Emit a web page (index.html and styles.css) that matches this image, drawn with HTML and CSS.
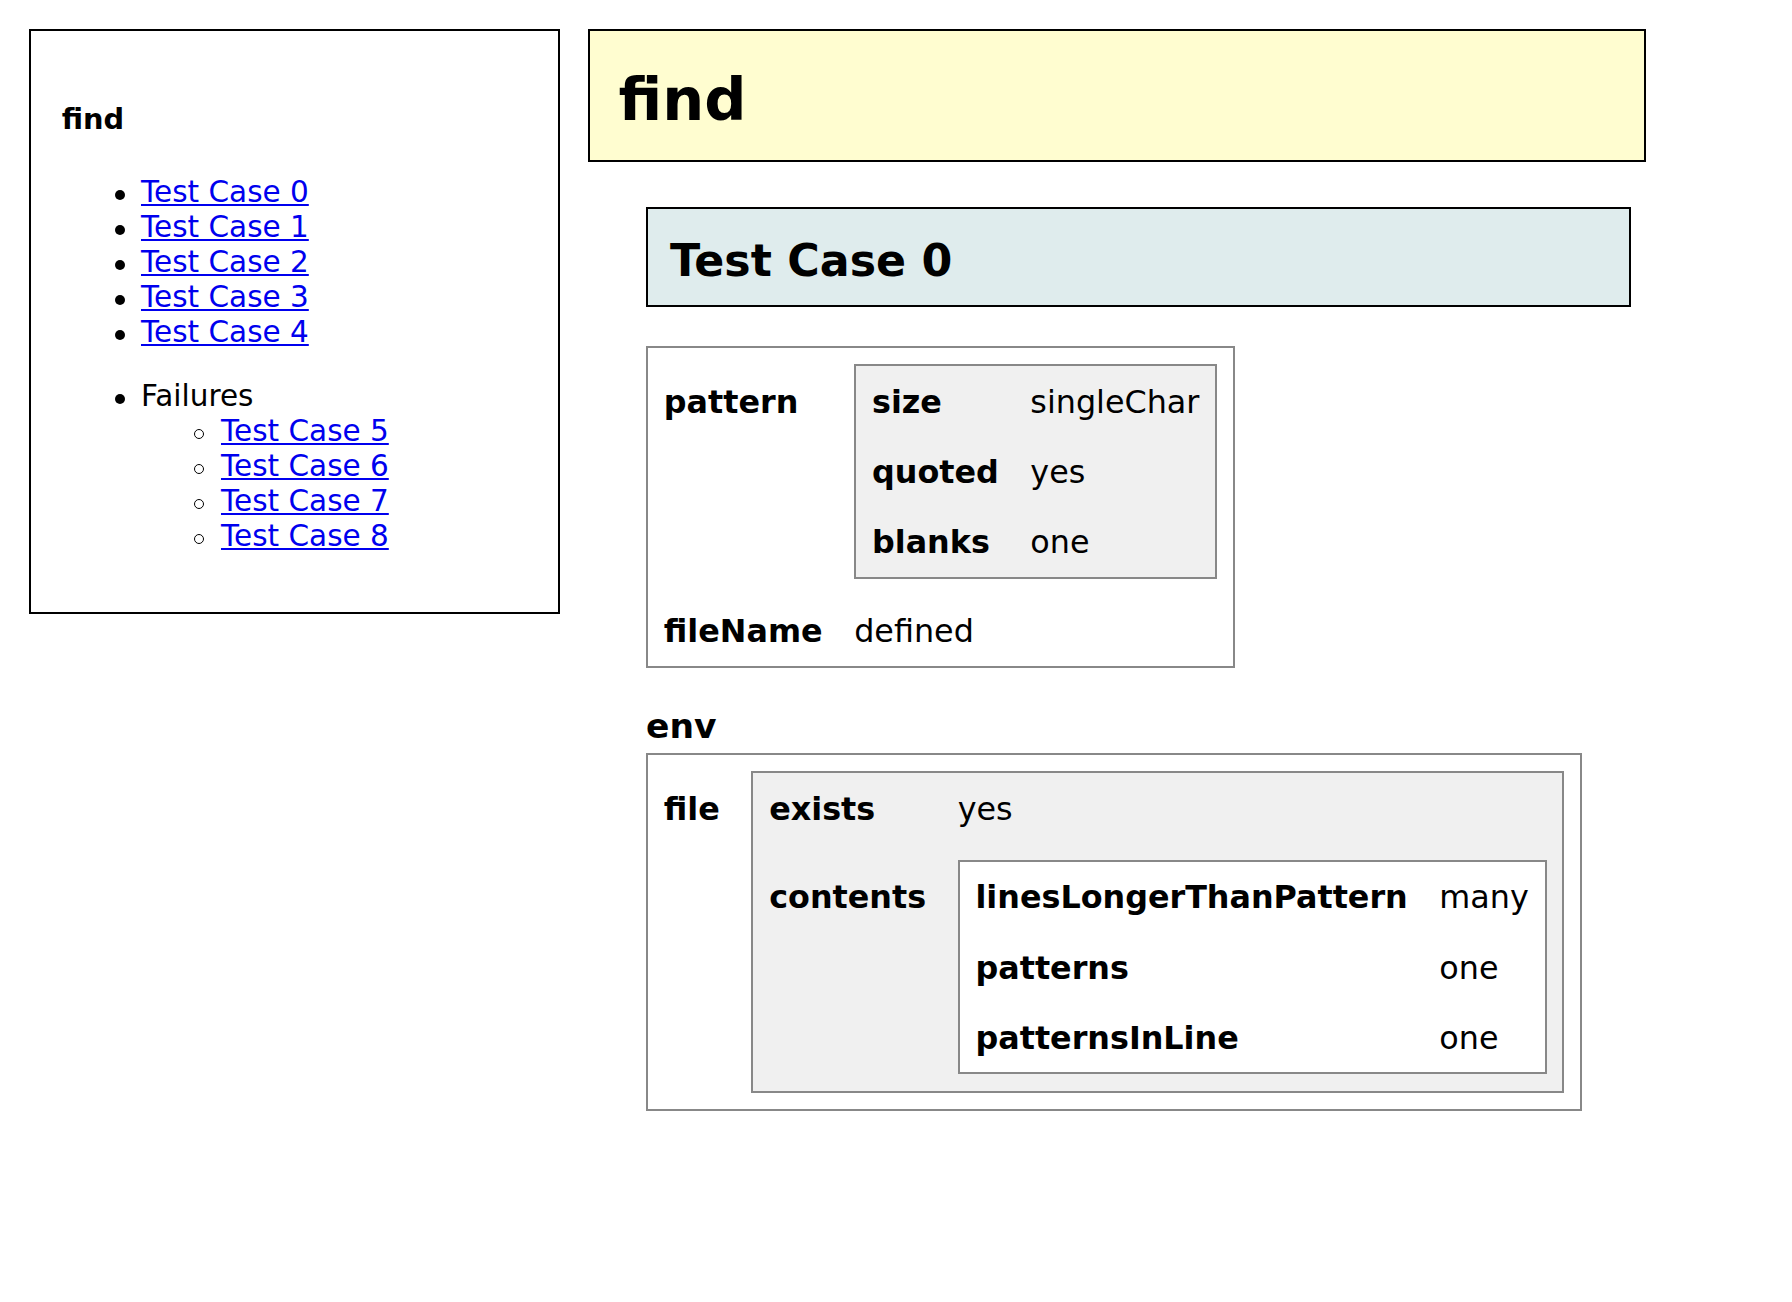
FILE: index.html
```html
<!DOCTYPE html>
<html lang="en">
<head>
<meta charset="utf-8">
<title>find</title>
<link rel="stylesheet" href="styles.css">
</head>
<body>
<div class="page">
  <nav class="toc">
    <div class="toc-title">find</div>
    <ul class="toc-list">
      <li><a href="#tc0">Test Case 0</a></li>
      <li><a href="#tc1">Test Case 1</a></li>
      <li><a href="#tc2">Test Case 2</a></li>
      <li><a href="#tc3">Test Case 3</a></li>
      <li><a href="#tc4">Test Case 4</a></li>
    </ul>
    <ul class="toc-list toc-fail">
      <li>Failures
        <ul class="toc-sub">
          <li><a href="#tc5">Test Case 5</a></li>
          <li><a href="#tc6">Test Case 6</a></li>
          <li><a href="#tc7">Test Case 7</a></li>
          <li><a href="#tc8">Test Case 8</a></li>
        </ul>
      </li>
    </ul>
  </nav>
  <main class="content">
    <h1 class="doc-title">find</h1>
    <section class="case" id="tc0">
      <h2 class="case-title">Test Case 0</h2>
      <table class="kv kv-first">
        <tr>
          <td class="kv-key">pattern</td>
          <td class="kv-val">
            <table class="kv kv-grey">
              <tr><td class="kv-key">size</td><td class="kv-val">singleChar</td></tr>
              <tr><td class="kv-key">quoted</td><td class="kv-val">yes</td></tr>
              <tr><td class="kv-key">blanks</td><td class="kv-val">one</td></tr>
            </table>
          </td>
        </tr>
        <tr>
          <td class="kv-key">fileName</td>
          <td class="kv-val">defined</td>
        </tr>
      </table>
      <h3 class="group-title">env</h3>
      <table class="kv">
        <tr>
          <td class="kv-key">file</td>
          <td class="kv-val">
            <table class="kv kv-grey">
              <tr><td class="kv-key">exists</td><td class="kv-val">yes</td></tr>
              <tr>
                <td class="kv-key">contents</td>
                <td class="kv-val">
                  <table class="kv kv-white">
                    <tr><td class="kv-key">linesLongerThanPattern</td><td class="kv-val">many</td></tr>
                    <tr><td class="kv-key">patterns</td><td class="kv-val">one</td></tr>
                    <tr><td class="kv-key">patternsInLine</td><td class="kv-val">one</td></tr>
                  </table>
                </td>
              </tr>
            </table>
          </td>
        </tr>
      </table>
    </section>
  </main>
</div>
</body>
</html>
```

FILE: styles.css
```css
html, body {
  margin: 0;
  padding: 0;
  background: #ffffff;
}

body {
  font-family: "DejaVu Sans", Verdana, sans-serif;
  font-size: 29.5px;
  line-height: 35px;
  color: #000000;
}

a {
  color: #0000ee;
  text-decoration: underline;
}

.page {
  display: flex;
  align-items: flex-start;
  gap: 27.3px;
  padding: 29.3px 0 0 29.3px;
}

/* ---------- table of contents ---------- */
.toc {
  box-sizing: border-box;
  flex: 0 0 531px;
  width: 531px;
  border: 2px solid #000000;
  padding: 0 0 57.5px 30.4px;
}

.toc-title {
  font-weight: bold;
  font-size: 28.8px;
  margin-top: 70.5px;
}

.toc-list {
  margin: 38px 0 0;
  padding-left: 79.3px;
  list-style: none;
}

.toc-fail {
  margin-top: 29.4px;
}

.toc-sub {
  margin: 0;
  padding-left: 80px;
  list-style: none;
}

.toc li {
  position: relative;
}

/* list bullets (disc / circle) */
.toc li::before {
  content: "";
  position: absolute;
  left: -26px;
  top: 15px;
  width: 10px;
  height: 10px;
  box-sizing: border-box;
  border-radius: 50%;
  background: #000000;
}

.toc-sub li::before {
  left: -27px;
  background: transparent;
  border: 1.4px solid #000000;
}

/* ---------- main content ---------- */
.content {
  flex: 0 0 1058.3px;
  width: 1058.3px;
}

.doc-title {
  margin: 0;
  border: 2px solid #000000;
  background: #fffdd0;
  font-size: 59px;
  line-height: 70px;
  font-weight: bold;
  padding: 33.8px 29px 24.6px;
}

.case {
  margin: 45.6px 14.6px 0 58.4px;
}

.case-title {
  margin: 0;
  border: 2px solid #000000;
  background: #dfeced;
  font-size: 44.3px;
  line-height: 52.5px;
  font-weight: bold;
  padding: 25.5px 22px 17.5px;
}

.group-title {
  margin: 38.5px 0 5.5px;
  font-size: 34.5px;
  line-height: 41px;
  font-weight: bold;
}

/* ---------- key / value tables ---------- */
.kv {
  border: 2px solid #888888;
  border-collapse: separate;
  border-spacing: 0;
  font-size: 31.8px;
  line-height: 37.2px;
  background: #ffffff;
}

.kv-first {
  margin-top: 39px;
}

.kv-grey {
  background: #f0f0f0;
}

.kv-white {
  background: #ffffff;
}

.kv td {
  padding: 16.5px 15.8px;
  vertical-align: baseline;
  text-align: left;
  white-space: nowrap;
}

.kv-key {
  font-weight: bold;
}
```
